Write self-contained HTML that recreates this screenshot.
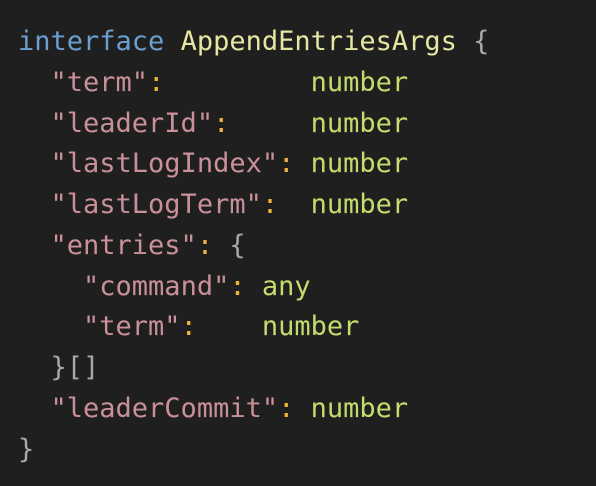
<!DOCTYPE html>
<html><head><style>
html,body{margin:0;padding:0;background:#1f1f1f;width:596px;height:486px;overflow:hidden}
pre{margin:0;position:absolute;left:18px;top:22px;font-family:"DejaVu Sans Mono","Liberation Mono",monospace;font-size:27px;line-height:40.75px;color:#a8a8a8}
.k{color:#6a9fd0}.c{color:#e6e6a2}.s{color:#c99098}.o{color:#f0b43c}.n{color:#c4dc6c}
</style></head><body><pre><span class="k">interface</span> <span class="c">AppendEntriesArgs</span> {
  <span class="s">"term"</span><span class="o">:</span>         <span class="n">number</span>
  <span class="s">"leaderId"</span><span class="o">:</span>     <span class="n">number</span>
  <span class="s">"lastLogIndex"</span><span class="o">:</span> <span class="n">number</span>
  <span class="s">"lastLogTerm"</span><span class="o">:</span>  <span class="n">number</span>
  <span class="s">"entries"</span><span class="o">:</span> {
    <span class="s">"command"</span><span class="o">:</span> <span class="n">any</span>
    <span class="s">"term"</span><span class="o">:</span>    <span class="n">number</span>
  }[]
  <span class="s">"leaderCommit"</span><span class="o">:</span> <span class="n">number</span>
}</pre></body></html>
